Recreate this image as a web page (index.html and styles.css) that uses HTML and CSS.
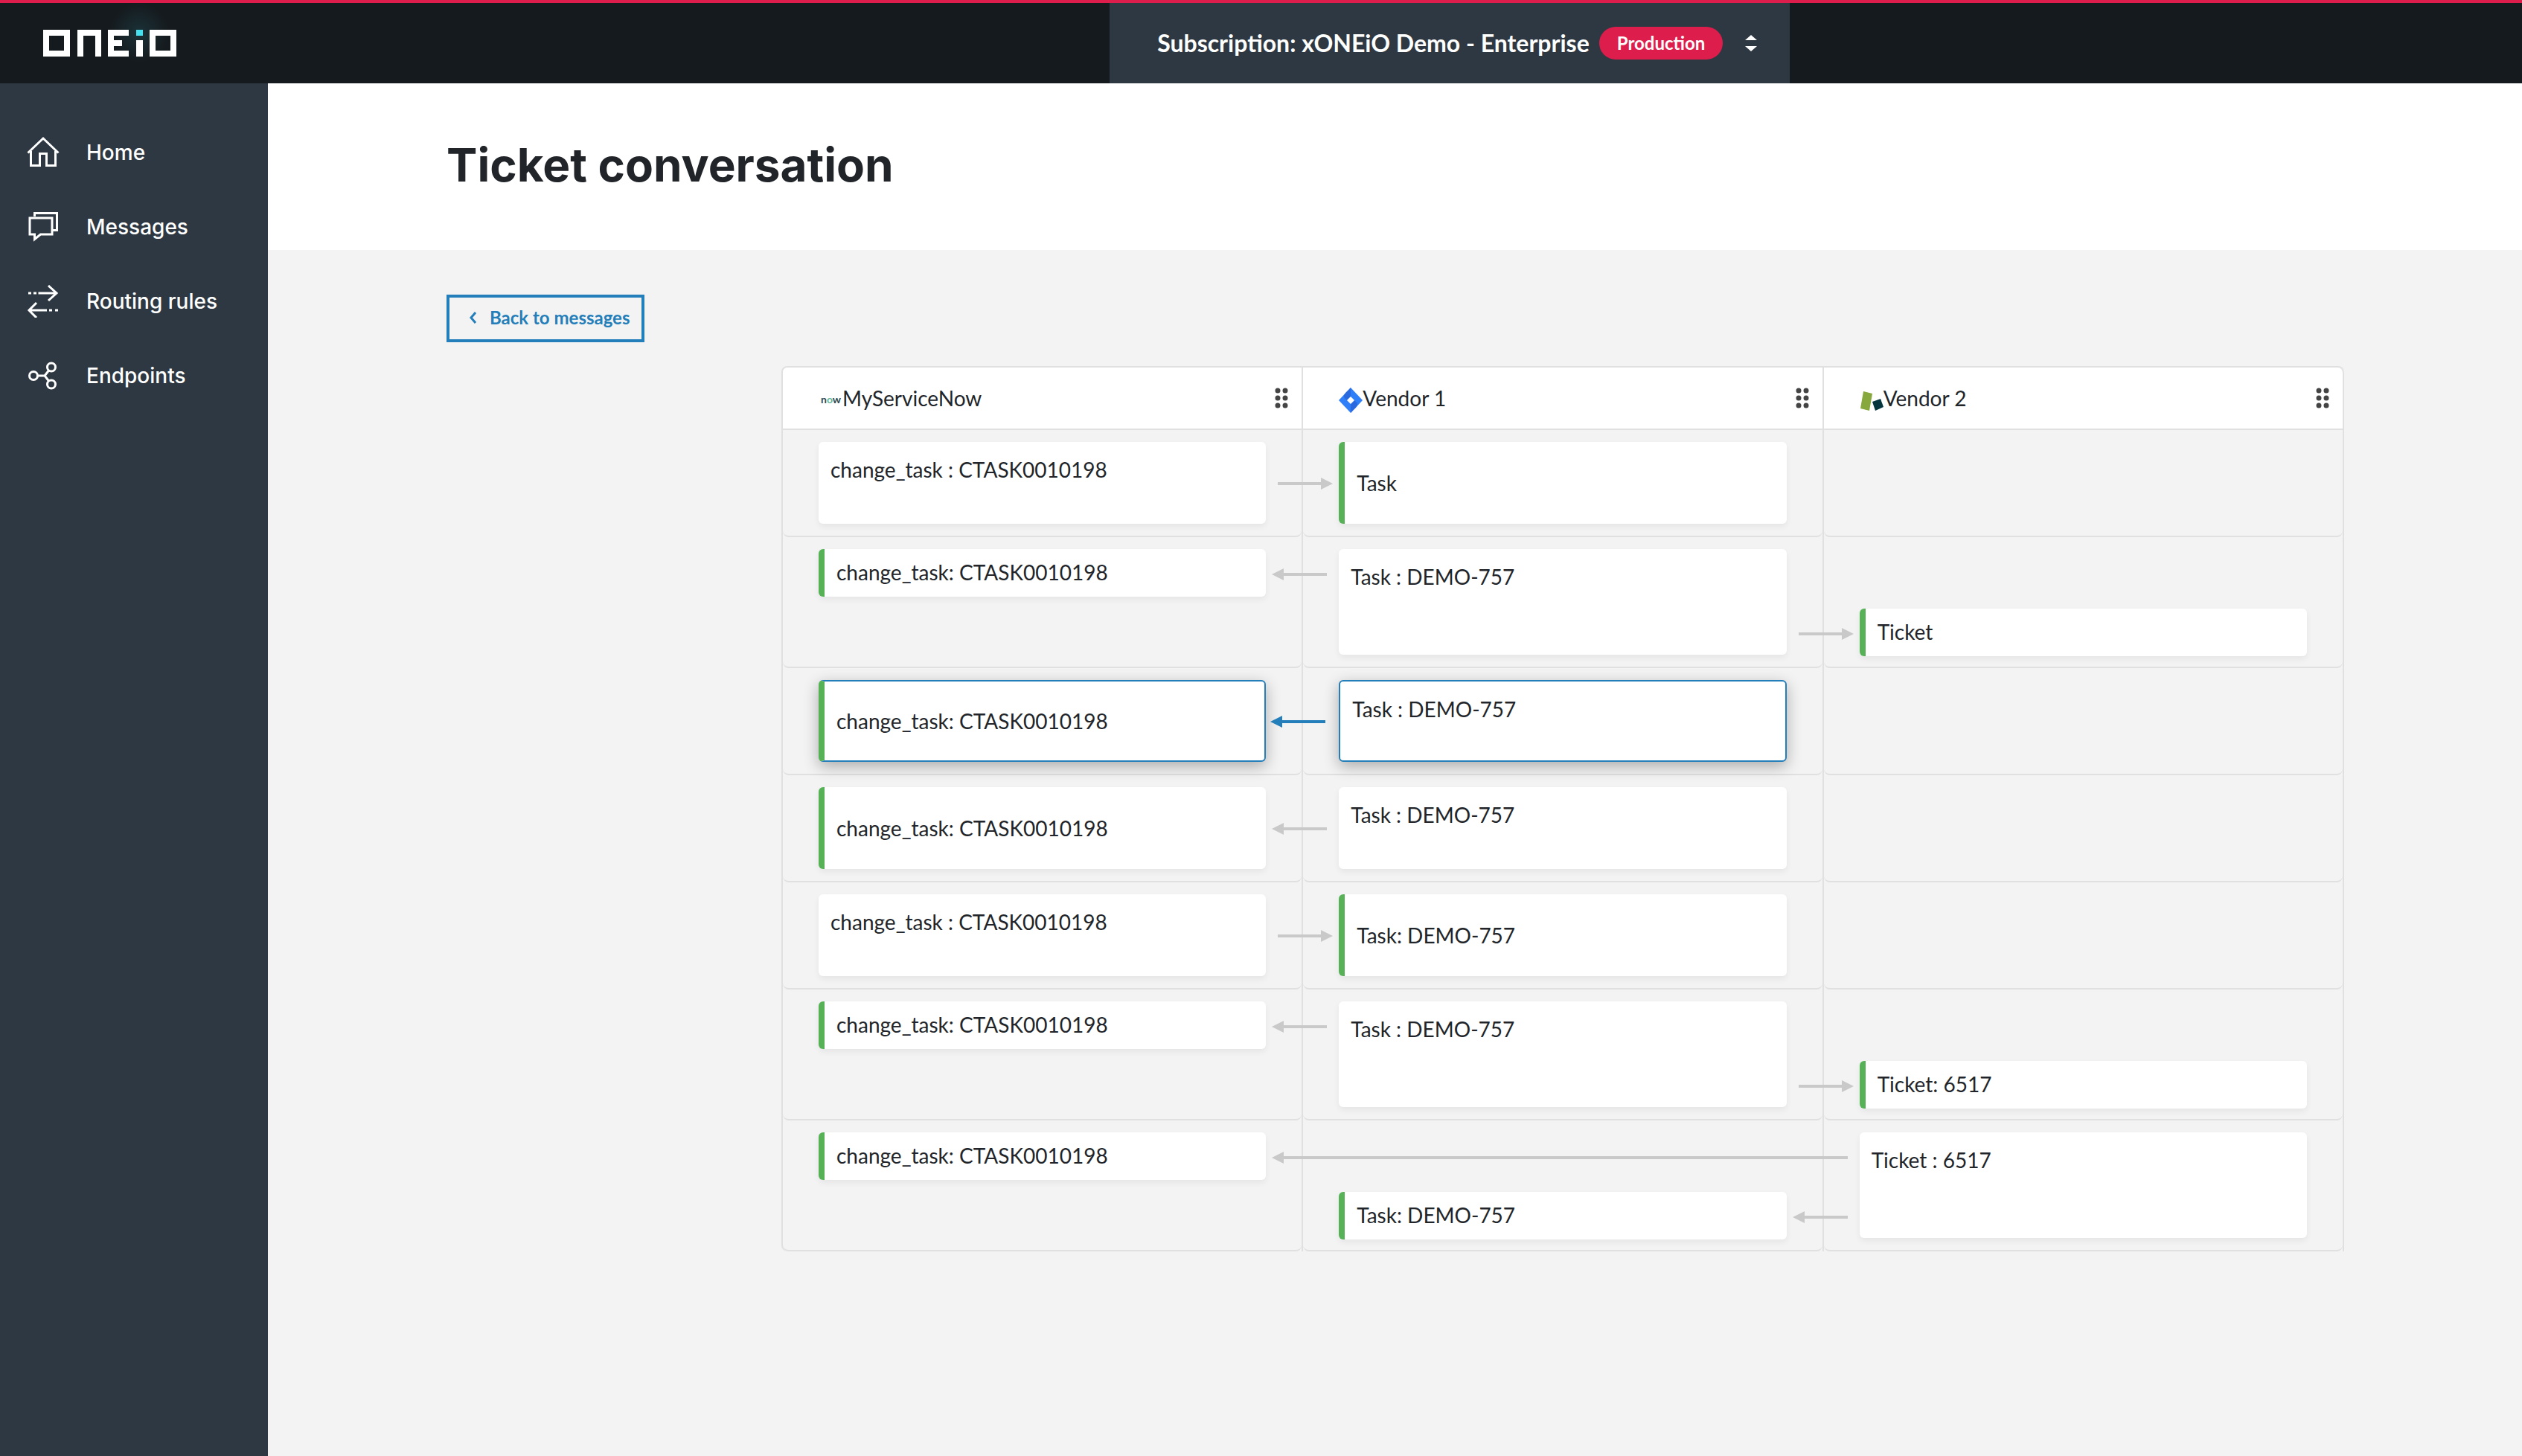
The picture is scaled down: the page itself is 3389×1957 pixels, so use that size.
FILE: index.html
```html
<!DOCTYPE html>
<html lang="en">
<head>
    <meta charset="UTF-8">
    <meta name="viewport" content="width=device-width, initial-scale=1.0">
    <title>Ticket conversation</title>
    <link rel="stylesheet" href="styles.css">
</head>
<body>
    <header class="topbar">
        <a class="logo" href="#" aria-label="ONEiO">
            <svg width="260" height="108" viewBox="0 4 260 108">
                <defs>
                    <radialGradient id="glow">
                        <stop offset="0" stop-color="#44e0f0" stop-opacity="0.12"/>
                        <stop offset="1" stop-color="#44e0f0" stop-opacity="0"/>
                    </radialGradient>
                </defs>
                <circle cx="187" cy="44" r="40" fill="url(#glow)"/>
                <g fill="#fff">
                    <rect x="62" y="44" width="28" height="28" fill="none" stroke="#fff" stroke-width="8"/>
                    <rect x="104" y="40" width="32" height="8"/>
                    <rect x="104" y="40" width="8" height="36"/>
                    <rect x="128" y="40" width="8" height="36"/>
                    <rect x="145" y="40" width="8" height="36"/>
                    <rect x="145" y="40" width="28" height="8"/>
                    <rect x="145" y="54" width="19" height="8"/>
                    <rect x="145" y="68" width="28" height="8"/>
                    <rect x="183" y="54" width="9" height="22"/>
                    <rect x="205" y="44" width="28" height="28" fill="none" stroke="#fff" stroke-width="8"/>
                </g>
                <rect x="183" y="40" width="9" height="8" fill="#44e0f0"/>
            </svg>
        </a>
        <button class="subscription" type="button">
            <span class="subscription-name">Subscription: xONEiO Demo - Enterprise</span>
            <span class="badge">Production</span>
            <svg class="sort" width="16" height="22" viewBox="0 0 16 22" fill="#fff">
                <path d="M0 7 8 0l8 7zM0 15h16l-8 7z"/>
            </svg>
        </button>
    </header>

    <div class="layout">
        <nav class="sidebar">
            <a href="#">
                <svg width="44" height="44" viewBox="0 0 44 44">
                    <path d="M1.500 22.500 22 3l20.500 19.500M5.500 20v19.500h12v-16h9v16h12V20"/>
                </svg>
                Home
            </a>
            <a href="#">
                <svg width="44" height="44" viewBox="0 0 44 44">
                    <path d="M10.500 8V3.500h30v23H34M4 10h30v22H18.500l-8 6.500V32H4z"/>
                </svg>
                Messages
            </a>
            <a href="#">
                <svg width="44" height="44" viewBox="0 0 44 44">
                    <path d="M2 11h4M9 11h4M15.500 11H40M29 1l11 10-11 10M42 34h-4M34 34h-4M27 34H3M13 24 3 34l10 10"/>
                </svg>
                Routing rules
            </a>
            <a href="#">
                <svg width="44" height="44" viewBox="0 0 44 44">
                    <circle cx="9" cy="22" r="5.500"/>
                    <circle cx="33" cy="10.500" r="5.500"/>
                    <circle cx="33" cy="33.500" r="5.500"/>
                    <path d="M14.500 22H24M29.500 15 24 22l5.500 7"/>
                </svg>
                Endpoints
            </a>
        </nav>

        <main class="content">
            <div class="page-title">
                <h1>Ticket conversation</h1>
            </div>

            <div class="page-body">
                <a class="back" href="#">
                    <svg width="10" height="16" viewBox="0 0 10 16"><path d="M8 1 2 8l6 7"/></svg>
                    Back to messages
                </a>

                <table class="conversation">
                    <thead>
                        <tr>
                            <th>
                                <div class="head">
                                    <span class="now">n<span>o</span>w</span>MyServiceNow
                                    <button class="drag" type="button" aria-label="Move MyServiceNow">
                                        <svg width="18" height="28" viewBox="0 0 18 28"><path d="M4 4h0M14 4h0M4 14h0M14 14h0M4 24h0M14 24h0"/></svg>
                                    </button>
                                </div>
                            </th>
                            <th>
                                <div class="head">
                                    <svg width="32" height="40" viewBox="0 -4 32 40">
                                        <path d="M16 2 32 19 16 36 0 19z" fill="#2f7ff8"/>
                                        <path d="M16 2v12l-5 5-4-4c-1-5 5-8 9-13z" fill="#2a69de"/>
                                        <path d="M16 36V24l5-5 4 4c1 5-5 8-9 13z" fill="#2a69de"/>
                                        <path d="M16 14l5 5-5 5-5-5z" fill="#fff"/>
                                    </svg>Vendor 1
                                    <button class="drag" type="button" aria-label="Move Vendor 1">
                                        <svg width="18" height="28" viewBox="0 0 18 28"><path d="M4 4h0M14 4h0M4 14h0M14 14h0M4 24h0M14 24h0"/></svg>
                                    </button>
                                </div>
                            </th>
                            <th>
                                <div class="head">
                                    <svg width="32" height="36" viewBox="0 0 32 36">
                                        <path d="M5 9l12 3-4 23-12-3z" fill="#86a83c"/>
                                        <path d="M17 23l11-4 4 11-11 5z" fill="#05363d"/>
                                    </svg>Vendor 2
                                    <button class="drag" type="button" aria-label="Move Vendor 2">
                                        <svg width="18" height="28" viewBox="0 0 18 28"><path d="M4 4h0M14 4h0M4 14h0M14 14h0M4 24h0M14 24h0"/></svg>
                                    </button>
                                </div>
                            </th>
                        </tr>
                    </thead>
                    <tbody>
                        <tr>
                            <td><div class="cell"><div class="card source">change_task : CTASK0010198</div></div></td>
                            <td><div class="cell"><div class="card target tall">Task<span class="arrow right"></span></div></div></td>
                            <td><div class="cell"></div></td>
                        </tr>
                        <tr>
                            <td><div class="cell"><div class="card target">change_task: CTASK0010198<span class="arrow left"></span></div></div></td>
                            <td><div class="cell"><div class="card source double">Task : DEMO-757</div></div></td>
                            <td><div class="cell"><div class="slot"></div><div class="card target">Ticket<span class="arrow right"></span></div></div></td>
                        </tr>
                        <tr>
                            <td><div class="cell"><div class="card target tall selected">change_task: CTASK0010198<span class="arrow left"></span></div></div></td>
                            <td><div class="cell"><div class="card source selected">Task : DEMO-757</div></div></td>
                            <td><div class="cell"></div></td>
                        </tr>
                        <tr>
                            <td><div class="cell"><div class="card target tall">change_task: CTASK0010198<span class="arrow left"></span></div></div></td>
                            <td><div class="cell"><div class="card source">Task : DEMO-757</div></div></td>
                            <td><div class="cell"></div></td>
                        </tr>
                        <tr>
                            <td><div class="cell"><div class="card source">change_task : CTASK0010198</div></div></td>
                            <td><div class="cell"><div class="card target tall">Task: DEMO-757<span class="arrow right"></span></div></div></td>
                            <td><div class="cell"></div></td>
                        </tr>
                        <tr>
                            <td><div class="cell"><div class="card target">change_task: CTASK0010198<span class="arrow left"></span></div></div></td>
                            <td><div class="cell"><div class="card source double">Task : DEMO-757</div></div></td>
                            <td><div class="cell"><div class="slot"></div><div class="card target">Ticket: 6517<span class="arrow right"></span></div></div></td>
                        </tr>
                        <tr>
                            <td><div class="cell"><div class="card target">change_task: CTASK0010198<span class="arrow left long"></span></div></div></td>
                            <td><div class="cell"><div class="slot"></div><div class="card target">Task: DEMO-757<span class="arrow left"></span></div></div></td>
                            <td><div class="cell"><div class="card source double">Ticket : 6517</div></div></td>
                        </tr>
                    </tbody>
                </table>
            </div>
        </main>
    </div>
</body>
</html>
```

FILE: styles.css
```css
* {
    box-sizing: border-box;
}
body {
    margin: 0;
    min-height: 100vh;
    display: flex;
    flex-direction: column;
    font-family: Lato, sans-serif;
    font-size: 28px;
    line-height: 40px;
    color: #212529;
    background-color: #f3f3f3;
}
a {
    color: inherit;
    text-decoration: none;
}
button {
    font: inherit;
    color: inherit;
    border: none;
    cursor: pointer;
}
svg {
    display: block;
    flex: none;
}

/* top bar */
.topbar {
    display: grid;
    grid-template-columns: 44% auto 1fr;
    border-top: 4px solid #dd1d4b;
    background-color: #151a1e;
}
.subscription {
    display: flex;
    align-items: center;
    padding: 0 44px 0 64px;
    background-color: #2e3842;
    color: #fff;
    white-space: nowrap;
}
.subscription-name {
    font-size: 32px;
    font-weight: 700;
}
.badge {
    margin: 0 30px 0 13px;
    padding: 0 24px;
    border-radius: 22px;
    background-color: #dd1d4b;
    font-size: 24px;
    font-weight: 700;
    line-height: 44px;
}

/* side menu */
.layout {
    flex: 1;
    display: flex;
}
.sidebar {
    flex: none;
    width: 360px;
    padding-top: 43px;
    background-color: #2e3842;
    color: #fff;
    font-family: Inter, sans-serif;
    font-weight: 500;
}
.sidebar a {
    display: flex;
    align-items: center;
    gap: 36px;
    height: 100px;
    padding-left: 36px;
}
.sidebar svg {
    fill: none;
    stroke: #fff;
    stroke-width: 3;
}

/* page */
.content {
    flex: 1;
}
.page-title {
    padding: 70px 240px 74px;
    background-color: #fff;
}
.page-title h1 {
    margin: 0;
    font-family: Inter, sans-serif;
    font-size: 62px;
    font-weight: 700;
    line-height: 80px;
}
.page-body {
    padding: 60px 239px 60px 240px;
}
.back {
    display: inline-flex;
    align-items: center;
    gap: 17px;
    height: 64px;
    padding: 0 15px 2px 27px;
    border: 4px solid #247eb9;
    color: #247eb9;
    font-size: 24px;
    font-weight: 700;
}
.back svg {
    fill: none;
    stroke: #247eb9;
    stroke-width: 3;
}

/* conversation table */
.conversation {
    width: calc(100% - 450px);
    margin: 32px 0 0 450px;
    table-layout: fixed;
    border-collapse: separate;
    border-spacing: 0;
    border: solid #e0e0e0;
    border-width: 2px 0 0 2px;
    border-radius: 8px;
}
th, td {
    padding: 0;
    border-right: 2px solid #e0e0e0;
    text-align: left;
    vertical-align: top;
}
th {
    border-bottom: 2px solid #e0e0e0;
    background-color: #fff;
    font-weight: 400;
}
th:first-child {
    border-top-left-radius: 6px;
}
th:last-child {
    border-top-right-radius: 8px;
}
td {
    height: 1px;
}
.head {
    display: flex;
    align-items: center;
    height: 82px;
    padding: 0 18px 0 48px;
}
.now {
    width: 32px;
    padding: 4px 0 0 3px;
    font-size: 14px;
    font-weight: 700;
    line-height: 16px;
    color: #2b4a50;
}
.now span {
    color: #62b89b;
}
.drag {
    margin-left: auto;
    padding: 0;
    background: none;
}
.drag svg {
    fill: none;
    stroke: #444;
    stroke-width: 7;
    stroke-linecap: round;
}
.cell {
    height: 100%;
    padding: 16px 48px 14px;
    border-bottom: 2px solid #e0e0e0;
    border-radius: 0 0 8px 8px;
}
.slot {
    height: 64px;
    margin-bottom: 16px;
}
.card {
    position: relative;
    border-radius: 6px;
    background-color: #fff;
    box-shadow: 0 4px 8px rgba(0, 0, 0, 0.06);
}
.source {
    height: 110px;
    margin-bottom: 2px;
    padding: 17px 16px;
}
.double {
    height: 142px;
}
.target {
    display: flex;
    align-items: center;
    height: 64px;
    padding: 0 16px 2px;
    border-left: 8px solid #57b257;
}
.tall {
    height: 110px;
    margin-bottom: 2px;
    padding-bottom: 0;
}
.selected {
    border: 2px solid #247eb9;
    box-shadow: 0 6px 20px rgba(0, 0, 0, 0.3);
}
.target.selected {
    border-left: 8px solid #57b257;
}

/* arrows between the cards */
.arrow {
    position: absolute;
    top: 26px;
    width: 74px;
    height: 16px;
    color: #c9c9c9;
    background: linear-gradient(currentColor, currentColor) center / 100% 4px no-repeat;
}
.tall .arrow {
    top: 48px;
}
.selected .arrow {
    color: #247eb9;
    top: 46px;
}
.arrow::after {
    content: "";
    position: absolute;
    top: 0;
    border: 8px solid transparent;
}
.left {
    left: calc(100% + 8px);
    background-size: calc(100% - 16px) 4px;
    background-position: right center;
}
.left::after {
    left: 0;
    border-left: none;
    border-right: 16px solid currentColor;
}
.right {
    left: -90px;
    background-size: calc(100% - 16px) 4px;
    background-position: left center;
}
.right::after {
    right: 0;
    border-right: none;
    border-left: 16px solid currentColor;
}
.long {
    width: calc(100% + 180px);
}
```
